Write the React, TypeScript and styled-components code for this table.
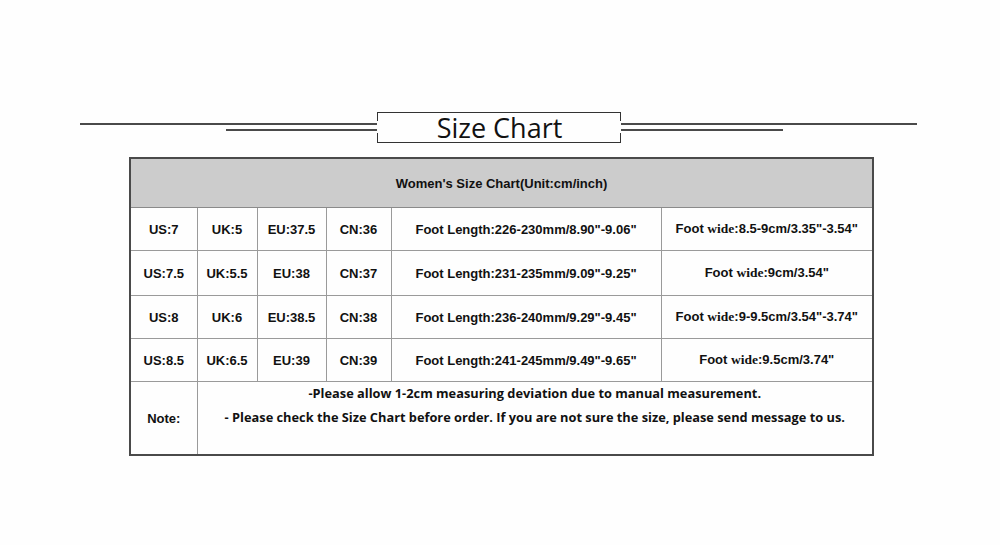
import styled, { createGlobalStyle } from 'styled-components';

const GlobalStyle = createGlobalStyle`
  html, body {
    margin: 0;
    padding: 0;
    background: #fefefe;
  }
  body {
    font-family: 'Liberation Sans', Arial, sans-serif;
    color: #111;
  }
`;

const Page = styled.main`
  width: 1000px;
  height: 545px;
  padding-top: 112px;
  box-sizing: border-box;
`;

const TitleRow = styled.div`
  display: flex;
  align-items: center;
  margin-left: 80px;
  width: 837px;
  height: 31px;
`;

const LineStack = styled.div<{ $side: 'left' | 'right' }>`
  flex: 1;
  display: flex;
  flex-direction: column;
  align-items: ${(p) => (p.$side === 'left' ? 'flex-end' : 'flex-start')};
  gap: 4px;
  margin-top: -1px;
`;

const Rule = styled.div<{ $w: string }>`
  width: ${(p) => p.$w};
  height: 2px;
  background: #4a4a4a;
`;

const TitleBox = styled.div`
  width: 244px;
  height: 31px;
  box-sizing: border-box;
  border-top: 1px solid #333;
  border-bottom: 1px solid #333;
  background:
    linear-gradient(#333, #333) left top / 1px 8px no-repeat,
    linear-gradient(#333, #333) left bottom / 1px 9px no-repeat,
    linear-gradient(#333, #333) right top / 1px 8px no-repeat,
    linear-gradient(#333, #333) right bottom / 1px 9px no-repeat;
  display: flex;
  align-items: center;
  justify-content: center;
`;

const Title = styled.h1`
  margin: 0 0 0 2px;
  font-family: 'Open Sans', 'Noto Sans', sans-serif;
  font-weight: 400;
  font-size: 27px;
  line-height: 1;
  color: #111;
`;

const Table = styled.table`
  margin: 14px 0 0 129px;
  width: 743px;
  border-collapse: collapse;
  border: 2px solid #4a4a4a;
  table-layout: fixed;
`;

const HeadCell = styled.th`
  height: 48px;
  background: #cccccc;
  border: 1px solid #8a8a8a;
  font-size: 13px;
  font-weight: 700;
  text-align: center;
  padding: 0;
`;

const Cell = styled.td<{ $h?: number }>`
  height: ${(p) => p.$h ?? 42}px;
  border: 1px solid #9a9a9a;
  font-size: 13px;
  font-weight: 700;
  text-align: center;
  padding: 0;
  white-space: nowrap;
`;

const Serif = styled.span`
  font-family: 'Liberation Serif', 'Times New Roman', serif;
  font-size: 13.5px;
`;

const NoteCell = styled.td`
  height: 72px;
  border: 1px solid #9a9a9a;
  padding: 0;
  vertical-align: top;
  text-align: center;
`;

const NoteLines = styled.div`
  display: flex;
  flex-direction: column;
  align-items: center;
  row-gap: 2px;
  font-family: 'Open Sans', 'Noto Sans', sans-serif;
  font-weight: 700;
  font-size: 12.8px;
  line-height: 22px;
  color: #111;
`;

const widths = [67, 60, 69, 65, 270, 212];

const rows = [
  { us: '7', uk: '5', eu: '37.5', cn: '36', len: '226-230mm/8.90"-9.06"', wide: '8.5-9cm/3.35"-3.54"', h: 42 },
  { us: '7.5', uk: '5.5', eu: '38', cn: '37', len: '231-235mm/9.09"-9.25"', wide: '9cm/3.54"', h: 44 },
  { us: '8', uk: '6', eu: '38.5', cn: '38', len: '236-240mm/9.29"-9.45"', wide: '9-9.5cm/3.54"-3.74"', h: 42 },
  { us: '8.5', uk: '6.5', eu: '39', cn: '39', len: '241-245mm/9.49"-9.65"', wide: '9.5cm/3.74"', h: 42 },
];

export default function App() {
  return (
    <>
      <GlobalStyle />
      <Page>
        <TitleRow>
          <LineStack $side="left">
            <Rule $w="100%" />
            <Rule $w="151px" />
          </LineStack>
          <TitleBox>
            <Title>Size Chart</Title>
          </TitleBox>
          <LineStack $side="right">
            <Rule $w="100%" />
            <Rule $w="162px" />
          </LineStack>
        </TitleRow>
        <Table>
          <colgroup>
            {widths.map((w, i) => (
              <col key={i} style={{ width: w }} />
            ))}
          </colgroup>
          <thead>
            <tr>
              <HeadCell colSpan={6}>Women's Size Chart(Unit:cm/inch)</HeadCell>
            </tr>
          </thead>
          <tbody>
            {rows.map((r) => (
              <tr key={r.us}>
                <Cell $h={r.h}>US:{r.us}</Cell>
                <Cell $h={r.h}>UK:{r.uk}</Cell>
                <Cell $h={r.h}>EU:{r.eu}</Cell>
                <Cell $h={r.h}>CN:{r.cn}</Cell>
                <Cell $h={r.h}>Foot Length:{r.len}</Cell>
                <Cell $h={r.h}>
                  Foot <Serif>wide</Serif>:{r.wide}
                </Cell>
              </tr>
            ))}
            <tr>
              <Cell $h={72}>Note:</Cell>
              <NoteCell colSpan={5}>
                <NoteLines>
                  <span>-Please allow 1-2cm measuring deviation due to manual measurement.</span>
                  <span>- Please check the Size Chart before order. If you are not sure the size, please send message to us.</span>
                </NoteLines>
              </NoteCell>
            </tr>
          </tbody>
        </Table>
      </Page>
    </>
  );
}
